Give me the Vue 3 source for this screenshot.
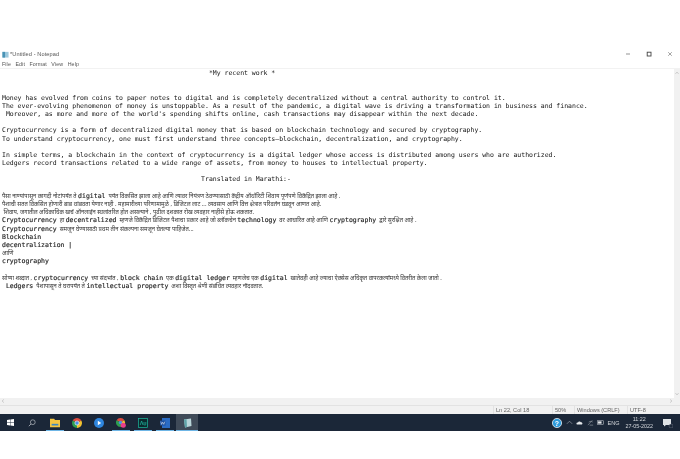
<script setup>
const lines = [
  [['m', '                                                     *My recent work *']],
  [], [],
  [['m', 'Money has evolved from coins to paper notes to digital and is completely decentralized without a central authority to control it.']],
  [['m', 'The ever-evolving phenomenon of money is unstoppable. As a result of the pandemic, a digital wave is driving a transformation in business and finance.']],
  [['m', ' Moreover, as more and more of the world\'s spending shifts online, cash transactions may disappear within the next decade.']],
  [],
  [['m', 'Cryptocurrency is a form of decentralized digital money that is based on blockchain technology and secured by cryptography.']],
  [['m', 'To understand cryptocurrency, one must first understand three concepts—blockchain, decentralization, and cryptography.']],
  [],
  [['m', 'In simple terms, a blockchain in the context of cryptocurrency is a digital ledger whose access is distributed among users who are authorized.']],
  [['m', 'Ledgers record transactions related to a wide range of assets, from money to houses to intellectual property.']],
  [],
  [['m', '                                                   Translated in Marathi:-']],
  [],
  [['d', 'पैसा नाण्यांपासून कागदी नोटांपर्यंत ते '], ['b', 'digital'], ['d', '  पर्यंत विकसित झाला आहे आणि त्यावर नियंत्रण ठेवण्यासाठी केंद्रीय ऑथॉरिटी शिवाय पूर्णपणे विकेंद्रित झाला आहे .']],
  [['d', 'पैशाची सतत विकसित होणारी बाब थांबवता येणार नाही . महामारीच्या परिणामामुळे , डिजिटल लाट ... व्यवसाय आणि वित्त क्षेत्रात परिवर्तन घडवून आणत आहे.']],
  [['d', ' शिवाय, जगातील अधिकाधिक खर्च ऑनलाईन स्थलांतरित होत असल्याने , पुढील दशकात रोख व्यवहार नाहीसे होऊ शकतात.']],
  [['b', 'Cryptocurrency'], ['d', '  हा '], ['b', 'decentralized'], ['d', '  म्हणजे विकेंद्रित डिजिटल पैशाचा प्रकार आहे जो ब्लॉकचेन '], ['b', 'technology'], ['d', '  वर आधारित आहे आणि '], ['b', 'cryptography'], ['d', '  द्वारे सुरक्षित आहे .']],
  [['b', 'Cryptocurrency'], ['d', '  समजून घेण्यासाठी प्रथम तीन संकल्पना समजून घेतल्या पाहिजेत...']],
  [['b', 'Blockchain']],
  [['b', 'decentralization |']],
  [['d', 'आणि']],
  [['b', 'cryptography']],
  [],
  [['d', 'सोप्या शब्दात , '], ['b', 'cryptocurrency'], ['d', '  च्या संदर्भात , '], ['b', 'block chain'], ['d', '  एक '], ['b', 'digital ledger'], ['d', '  म्हणजेच एक '], ['b', 'digital'], ['d', '  खातेवही आहे ज्याचा ऐक्सेस अधिकृत वापरकर्त्यांमध्ये वितरीत केला जातो .']],
  [['b', ' Ledgers'], ['d', '  पैशापासून ते घरापर्यंत ते '], ['b', 'intellectual property'], ['d', '  अशा विस्तृत श्रेणी संबंधित व्यवहार नोंदवतात.']],
]
const menus = ['File', 'Edit', 'Format', 'View', 'Help']
</script>

<template>
  <div class="page">
    <div class="window">
      <header class="titlebar">
        <svg class="nicon" viewBox="0 0 8 8"><rect x="0.5" y="1" width="7" height="6.5" fill="#9cc8dc"/><rect x="0.5" y="1" width="3" height="6.5" fill="#4a93b5"/></svg>
        <span>*Untitled - Notepad</span>
        <div class="wincontrols">
          <svg class="ctlsvg" viewBox="0 0 6 6"><path d="M1 3h4" stroke="#666" stroke-width="0.7"/></svg>
          <svg class="ctlsvg mid" viewBox="0 0 6 6"><rect x="1.200" y="1.200" width="3.800" height="3.800" fill="none" stroke="#444" stroke-width="0.9"/></svg>
          <svg class="ctlsvg last" viewBox="0 0 6 6"><path d="M1.200 1.200 4.800 4.800M4.800 1.200 1.200 4.800" stroke="#666" stroke-width="0.6"/></svg>
        </div>
      </header>
      <nav class="menubar"><span v-for="m in menus" :key="m">{{ m }}</span></nav>
      <div class="editor">
        <div class="text">
          <div v-for="(l, i) in lines" :key="i" class="line"><span v-for="(s, j) in l" :key="j" :class="s[0]">{{ s[1] }}</span></div>
        </div>
        <div class="vscroll">
          <svg class="arrow" viewBox="0 0 6 6"><path d="M1.500 3.800 3 2.200 4.500 3.800" fill="none" stroke="#aaa" stroke-width="0.6"/></svg>
          <svg class="arrow" viewBox="0 0 6 6"><path d="M1.500 2.200 3 3.800 4.500 2.200" fill="none" stroke="#aaa" stroke-width="0.6"/></svg>
        </div>
      </div>
      <div class="hscroll">
        <svg class="arrow" viewBox="0 0 6 6"><path d="M3.800 1.500 2.200 3 3.800 4.500" fill="none" stroke="#aaa" stroke-width="0.6"/></svg>
        <svg class="arrow" viewBox="0 0 6 6"><path d="M2.200 1.500 3.800 3 2.200 4.500" fill="none" stroke="#aaa" stroke-width="0.6"/></svg>
      </div>
      <footer class="status">
        <span class="pos">Ln 22, Col 18</span>
        <span class="zoomv">50%</span>
        <span class="eol">Windows (CRLF)</span>
        <span class="enc">UTF-8</span>
      </footer>
    </div>
    <div class="taskbar">
      <svg class="tb start" viewBox="0 0 9 9"><path d="M0 1.200 3.900.6v3.600H0zM4.400.5 9 0v4.200H4.400zM0 4.800h3.900v3.600L0 7.800zM4.400 4.800H9V9l-4.600-.6z" fill="#fff"/></svg>
      <svg class="tb search" viewBox="0 0 10 10"><circle cx="6" cy="4" r="3" fill="none" stroke="#c8ccd2" stroke-width="0.8"/><path d="M3.800 6.200 1 9" stroke="#c8ccd2" stroke-width="0.9"/></svg>
      <div class="app on"><svg viewBox="0 0 12 10"><path d="M0 0h5l1 1.500h6V10H0z" fill="#f5c542"/><rect x="2" y="6" width="8" height="2" fill="#3b88c3"/></svg></div>
      <div class="app"><svg viewBox="0 0 10 10"><path d="M5 5 .67 2.500A5 5 0 0 1 9.330 2.500z" fill="#dd4b3e"/><path d="M5 5 9.330 2.500A5 5 0 0 1 5 10z" fill="#f2c230"/><path d="M5 5V10A5 5 0 0 1 .67 2.500z" fill="#2f9e50"/><circle cx="5" cy="5" r="2.100" fill="#4a8fe7" stroke="#fff" stroke-width="0.6"/></svg></div>
      <div class="app"><svg viewBox="0 0 10 10"><circle cx="5" cy="5" r="5" fill="#2e86de"/><path d="M3.800 2.800 7.200 5 3.800 7.200z" fill="#fff"/></svg></div>
      <div class="app on"><svg viewBox="0 0 10 10"><path d="M4.500 4.500 .6 2.250A4.500 4.500 0 0 1 8.400 2.250z" fill="#dd4b3e"/><path d="M4.500 4.500 8.400 2.250A4.500 4.500 0 0 1 4.500 9z" fill="#f2c230"/><path d="M4.500 4.500V9A4.500 4.500 0 0 1 .6 2.250z" fill="#2f9e50"/><circle cx="4.500" cy="4.500" r="1.700" fill="#4a8fe7"/><circle cx="7.300" cy="7.200" r="2.500" fill="#e83e8c"/></svg></div>
      <div class="app on"><svg viewBox="0 0 10 10"><rect width="10" height="10" fill="#0a2a2e"/><rect x=".5" y=".5" width="9" height="9" fill="none" stroke="#1fb8a0" stroke-width=".7"/><path d="M2.200 7 3.600 3 5 7M6 4v2.600c0 .6 1.400.6 1.800 0V4" fill="none" stroke="#1fb8a0" stroke-width=".7"/></svg></div>
      <div class="app on"><svg viewBox="0 0 10 10"><rect x="2" y="0" width="8" height="10" fill="#2b6cc4"/><rect x="0" y="2.500" width="5.500" height="5" fill="#1a4e9e"/><path d="M.8 3.600 1.600 6.400 2.700 4.200 3.800 6.400 4.800 3.600" fill="none" stroke="#fff" stroke-width=".5"/></svg></div>
      <div class="app on active"><svg viewBox="0 0 10 10"><path d="M2 1.500 9 .5 9.500 8 3 9.500z" fill="#b9d5d9"/><path d="M2 1.500 4.500 1.200 5 9 3 9.500z" fill="#5fa3a8"/></svg></div>
      <div class="tray">
        <svg class="help" viewBox="0 0 10 10"><circle cx="5" cy="5" r="4.600" fill="#2d9bdc" stroke="#fff" stroke-width=".7"/><text x="5" y="7.600" text-anchor="middle" font-size="7" font-weight="700" fill="#fff" font-family="Liberation Sans">?</text></svg>
        <svg class="mini" viewBox="0 0 8 8"><path d="M1 5.500 4 2.500 7 5.500" fill="none" stroke="#aeb4bb" stroke-width=".7"/></svg>
        <svg class="mini" viewBox="0 0 8 8"><path d="M1 6.200c-1.200-1.200 0-2.600 1.200-2.200C2.600 2.600 5 2.200 5.600 3.800 7 3.600 8 5.400 6.800 6.200z" fill="#e6e9ec"/></svg>
        <svg class="mini" viewBox="0 0 8 8"><path d="M1 7 6 1.500M2 3.500c1.500-1 3-1 4.500 0M3 7h4" fill="none" stroke="#9aa1a8" stroke-width=".7"/></svg>
        <svg class="mini" viewBox="0 0 8 8"><rect x=".5" y="2" width="7" height="4" fill="none" stroke="#cdd1d6" stroke-width=".6"/><rect x="1.200" y="2.700" width="4" height="2.600" fill="#e6e9ec"/></svg>
        <span class="lang">ENG</span>
        <div class="clock"><span>11:22</span><span>27-05-2022</span></div>
        <svg class="notif" viewBox="0 0 10 10"><path d="M0 1h8v6H3L1 8.500V7H0z" fill="#dfe3e6"/><circle cx="8" cy="8" r="2" fill="#1b2738" stroke="#aab" stroke-width=".3"/></svg>
      </div>
    </div>
  </div>
</template>

<style scoped>
.page { width: 680px; height: 459px; padding-top: 47px; box-sizing: border-box; background: #fff; overflow: hidden; font-family: "Liberation Sans", sans-serif; filter: blur(0.35px); }
.window { display: flex; flex-direction: column; height: 367px; background: #fff; }
.titlebar { height: 14px; display: flex; align-items: center; padding-left: 2px; gap: 1px; font-size: 5.6px; letter-spacing: .1px; color: #555; }
.nicon { width: 7px; height: 7px; }
.wincontrols { margin-left: auto; display: flex; align-items: center; padding-right: 7px; }
.ctlsvg { width: 6px; height: 6px; }
.ctlsvg.mid { margin-left: 15px; }
.ctlsvg.last { margin-left: 15px; }
.menubar { height: 7px; box-sizing: border-box; padding: 0 0 1px 2px; display: flex; align-items: center; gap: 4.5px; font-size: 5.3px; letter-spacing: .1px; color: #555; }
.editor { flex: 1; display: flex; min-height: 0; border-top: 1px solid #f2f2f2; }
.text { flex: 1; padding: 0 0 0 2px; font-family: "DejaVu Sans Mono", monospace; font-size: 6.49px; color: #111; overflow: hidden; }
.line { height: 8.2px; line-height: 8.2px; white-space: pre; }
.b, .m { font-family: "DejaVu Sans Mono", monospace; }
.b { color: #222; -webkit-text-stroke: 0.15px #222; }
.d { font-family: "Noto Sans", "DejaVu Sans", sans-serif; font-size: 5.75px; color: #333; }
.vscroll { width: 6px; background: #f1f1f1; display: flex; flex-direction: column; justify-content: space-between; padding: 1px 0; box-sizing: border-box; }
.arrow { width: 6px; height: 6px; display: block; }
.hscroll { height: 7px; background: #f1f1f1; display: flex; justify-content: space-between; padding-right: 6px; }
.status { height: 9px; display: flex; align-items: center; font-size: 5.6px; color: #666; background: #f1f1f1; border-top: 1px solid #e2e2e2; box-sizing: border-box; }
.status span { border-left: 1px solid #e2e2e2; box-sizing: border-box; height: 8px; line-height: 8px; padding-left: 2px; }
.pos { margin-left: 493px; width: 59px; }
.zoomv { width: 22px; }
.eol { width: 53px; }
.taskbar { height: 17px; background: #1b2738; display: flex; align-items: center; }
.tb { flex: none; }
.start { width: 7px; height: 7px; margin-left: 7px; }
.search { width: 8px; height: 8px; margin-left: 14px; margin-right: 7.5px; }
.app { width: 22px; height: 17px; position: relative; display: flex; align-items: center; justify-content: center; }
.app svg { width: 10px; height: 10px; }
.app.on::after { content: ""; position: absolute; left: 2px; right: 2px; bottom: 0; height: 1px; background: #6fb6e6; }
.app.active { background: #3f4a58; }
.app.active::after { left: 0; right: 0; }
.tray { margin-left: auto; display: flex; align-items: center; gap: 3.5px; color: #d5d8dc; font-size: 5.5px; padding-right: 7px; }
.help { width: 10px; height: 10px; }
.mini { width: 7px; height: 7px; }
.clock { display: flex; flex-direction: column; align-items: center; line-height: 7px; font-size: 5.4px; margin-left: 2.5px; margin-right: 2px; }
.notif { width: 10px; height: 10px; margin-left: 4.5px; }
</style>
